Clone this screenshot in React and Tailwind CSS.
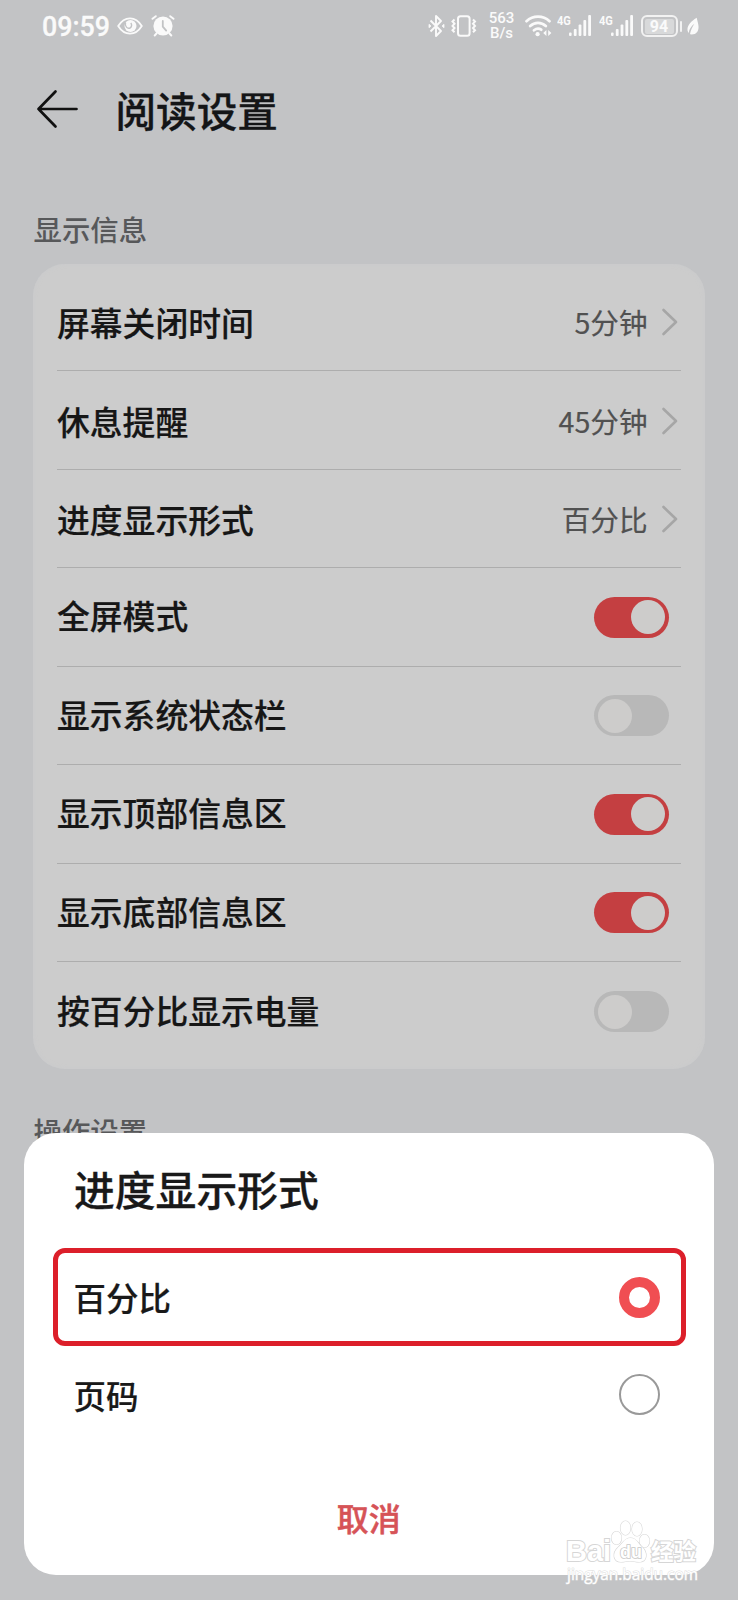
import React from "react";

const rows = [
  { label: "屏幕关闭时间", value: "5分钟" },
  { label: "休息提醒", value: "45分钟" },
  { label: "进度显示形式", value: "百分比" },
  { label: "全屏模式", on: true },
  { label: "显示系统状态栏", on: false },
  { label: "显示顶部信息区", on: true },
  { label: "显示底部信息区", on: true },
  { label: "按百分比显示电量", on: false },
];

const Signal = () => (
  <div className="flex h-[22px] w-[35px]">
    <span className="w-[12px] origin-left scale-x-85 font-['Roboto',sans-serif] text-[13px] font-bold leading-[12px]">4G</span>
    <svg width="23" height="22" viewBox="0 0 23 22" fill="currentColor">
      <rect x="0" y="17.5" width="2.6" height="3.5" rx="1" />
      <rect x="4.8" y="14" width="2.8" height="7" rx="1" />
      <rect x="9.6" y="9.5" width="2.8" height="11.5" rx="1" />
      <rect x="14.4" y="5" width="2.8" height="16" rx="1" />
      <rect x="19.2" y="0" width="2.8" height="21" rx="1" />
    </svg>
  </div>
);

const StatusBar = () => (
  <div className="flex h-[52px] items-center pl-[42px] pr-[39px] text-[#fafafa]">
    <span className="w-[75px] pt-[3px] font-['Roboto',sans-serif] text-[26.8px] font-medium leading-none [-webkit-text-stroke:0.3px_#fafafa]">09:59</span>
    <svg width="26" height="18" viewBox="0 0 26 18" fill="none" stroke="currentColor">
      <path d="M1.2 9C7.5-1.2 18.5-1.2 24.8 9 18.5 19.2 7.5 19.2 1.2 9Z" strokeWidth="1.8" />
      <circle cx="13.5" cy="9" r="6" fill="currentColor" stroke="none" />
      <path d="M8.5 5.5c-1 4 2 6.500 4.500 5.500 2-1 2-3.500.8-5" stroke="#c2c3c5" strokeWidth="1.4" />
    </svg>
    <svg className="ml-[8px]" width="25" height="22" viewBox="0 0 25 22" fill="none" stroke="currentColor" strokeLinecap="round">
      <circle cx="12" cy="11" r="9.6" fill="currentColor" stroke="none" />
      <path d="M1.5 3.800 4.800 1.200M22.500 3.800 19.200 1.200M5.500 18.500 3.700 20.500M18.500 18.500l1.800 2" strokeWidth="1.9" />
      <path d="M11.8 6v5.600l3.400 4" stroke="#c2c3c5" strokeWidth="1.8" />
    </svg>

    <div className="ml-auto flex items-center">
      <svg width="17" height="24" viewBox="0 0 17 24" fill="none" stroke="currentColor" strokeWidth="1.9" strokeLinejoin="round">
        <path d="M2.5 6.500 13 17l-5 5V2l5 5L2.500 17.500" />
        <path d="M1 10.300v3.400L3 12ZM16 10.300v3.400L14 12Z" fill="currentColor" strokeWidth=".8" />
      </svg>
      <svg className="ml-[5px]" width="28" height="22" viewBox="0 0 28 22" fill="none" stroke="currentColor" strokeWidth="2">
        <rect x="8" y="1.2" width="11.6" height="19.6" rx="2.5" />
        <path d="M4.500 4.500 2.500 6.500l2 2.200-2 2.200 2 2.200-2 2.200 2 2M23 4.500l2 2-2 2.200 2 2.200-2 2.200 2 2.200-2 2" strokeWidth="2" />
      </svg>
      <div className="ml-[9px] flex h-[30px] w-[30px] flex-col items-center justify-between font-['Roboto',sans-serif] text-[15px] font-medium leading-[15px]">
        <span>563</span>
        <span>B/s</span>
      </div>
      <svg className="ml-[8px]" width="27" height="22" viewBox="0 0 27 22" fill="none" stroke="currentColor" strokeWidth="2.7" strokeLinecap="round">
        <path d="M1.500 6.200c6.500-6 16.500-6 23 0M5.200 11c4.400-4.200 11.200-4.200 15.600 0M9 15.300c2.400-2 5-2.200 7.200-.6" />
        <circle cx="12.6" cy="19.2" r="2.1" fill="currentColor" stroke="none" />
        <path d="M21.400 15v6l-3.200-3ZM23.200 15v6l3.200-3Z" fill="currentColor" stroke="none" />
      </svg>
      <div className="ml-[5px] flex gap-[7px]">
        <Signal />
        <Signal />
      </div>
      <div className="ml-[7px] flex h-[22px] w-[37px] items-center justify-center rounded-[6px] border-2 border-[#f2f2f2]">
        <span className="flex h-[15px] w-[29px] items-center justify-center rounded-[2px] bg-[#d8d9da] pt-px font-['Roboto',sans-serif] text-[16px] font-bold leading-none">94</span>
      </div>
      <div className="ml-[2px] h-[11px] w-[2.5px] rounded bg-[#f2f2f2]" />
      <svg className="ml-[5px]" width="12" height="19" viewBox="0 0 13 19" fill="currentColor">
        <path d="M10.500 0C4.500 3.800.5 8 .5 12.500c0 1.800.5 3 1.300 4C2.500 12 4.800 9 8 6.500 6 10 4 13 3.200 18c6.300.8 9.500-2.500 9.300-8.500C12.300 6 11 3 10.500 0Z" />
      </svg>
    </div>
  </div>
);

const Toggle = ({ on }) => (
  <div className={`mr-[12px] mt-px flex h-[41px] w-[75px] items-center rounded-full px-[4px] ${on ? "justify-end bg-[#c43f41]" : "justify-start bg-[#b8b8b8]"}`}>
    <div className="size-[34px] rounded-full bg-[#cdcccb]" />
  </div>
);

const Row = ({ label, value, on }) => (
  <div className="flex h-[98.5px] items-center justify-between border-b border-[#adadad] last:border-b-0">
    <span className={`text-[32.8px] font-medium leading-none text-[#161616] [-webkit-text-stroke:0.2px_#161616] ${value ? "pt-[2px]" : "pb-[3px]"}`}>{label}</span>
    {value ? (
      <div className="flex items-center pr-[3px] pt-[2px]">
        <span className="text-[28.6px] leading-none text-[#515151] [-webkit-text-stroke:0.2px_#515151]">{value}</span>
        <svg className="ml-[13px]" width="17" height="28" viewBox="0 0 17 28" fill="none" stroke="#a6a6a6" strokeWidth="2.6" strokeLinecap="round" strokeLinejoin="round">
          <path d="M2.500 2 15 14 2.500 26" />
        </svg>
      </div>
    ) : (
      <Toggle on={on} />
    )}
  </div>
);

const Watermark = () => (
  <div className="absolute left-[566px] top-[1518px] w-[134px] text-white [paint-order:stroke]">
    <div className="flex h-[47px] items-end">
      <span className="w-[44px] font-['Liberation_Sans',sans-serif] text-[29px] font-bold leading-[28px] [-webkit-text-stroke:2px_#d6d6d6]">Bai</span>
      <svg width="41" height="46" viewBox="0 0 41 46" fill="#fff" stroke="#d8d8d8" strokeWidth="1.2">
        <ellipse cx="6.5" cy="19" rx="5" ry="6.5" />
        <ellipse cx="15.5" cy="9" rx="5" ry="7" />
        <ellipse cx="27" cy="10" rx="5" ry="7" />
        <ellipse cx="34.5" cy="22" rx="5" ry="6.5" />
        <path d="M20.500 19c6 0 7 5 11.500 9 6 5.500 5.500 15-3 15-4 0-5-1-9-1s-5 1-9 1c-8 0-9-9-3-14.500C12.500 25 14 19 20.500 19Z" />
        <text x="10" y="39" fontSize="18" fontWeight="bold" fontFamily="Liberation Sans" stroke="#c8c8c8" strokeWidth="1.6">du</text>
      </svg>
      <span className="text-[22.5px] font-bold leading-[29px] [-webkit-text-stroke:2px_#d6d6d6]">经验</span>
    </div>
    <div className="pl-px pt-px font-['Open_Sans',sans-serif] text-[15.4px] leading-[18px] [-webkit-text-stroke:1px_#dedede]">jingyan.baidu.com</div>
  </div>
);

const Dialog = () => (
  <div className="absolute left-[24px] top-[1133px] h-[442px] w-[689.5px] rounded-[32px] bg-white px-[28.5px] text-[#191919]">
    <h2 className="flex h-[115px] items-center pb-[2px] pl-[21.5px] text-[40.8px] font-medium leading-none [-webkit-text-stroke:0.3px_#191919]">进度显示形式</h2>
    <div className="flex h-[98px] w-[633.5px] items-center justify-between rounded-[12px] border-5 border-[#dc1f2a] pl-[16px] pr-[21px]">
      <span className="text-[32.5px] font-medium leading-none [-webkit-text-stroke:0.2px_#191919]">百分比</span>
      <span className="size-[41px] rounded-full border-10 border-[#f04e52]" />
    </div>
    <div className="flex h-[97px] items-center justify-between pl-[21px] pr-[25px]">
      <span className="pt-px text-[32.5px] font-medium leading-none [-webkit-text-stroke:0.2px_#191919]">页码</span>
      <span className="size-[41px] rounded-full border-2 border-[#999]" />
    </div>
    <button className="flex h-[148px] w-full items-center justify-center text-[32px] font-medium leading-none text-[#d65357] [-webkit-text-stroke:0.5px_#d65357]">取消</button>
  </div>
);

const App = () => (
  <div className="relative h-[1600px] w-[738px] overflow-hidden bg-[#c2c3c5] font-['Noto_Sans_CJK_SC',sans-serif]">
    <StatusBar />
    <header className="flex h-[116px] items-center pl-[36px]">
      <svg className="-mt-[2px]" width="43" height="40" viewBox="0 0 43 40" fill="none" stroke="#111" strokeWidth="2.7" strokeLinecap="round" strokeLinejoin="round">
        <path d="M19.500 2.500 2.500 20l17 17.500M2.500 20h38" />
      </svg>
      <h1 className="ml-[36.5px] text-[40.6px] font-medium leading-none text-[#141517] [-webkit-text-stroke:0.3px_#141517]">阅读设置</h1>
    </header>
    <h3 className="mt-[46px] pl-[33.5px] text-[28.4px] font-medium leading-[30px] text-[#57585a]">显示信息</h3>
    <div className="ml-[33px] mt-[20px] h-[805px] w-[671.5px] rounded-[32px] bg-[#cccccc] px-[24px] pt-[8.7px] shadow-[inset_0_0_5px_#c9cacc]">
      {rows.map((row) => (
        <Row key={row.label} {...row} />
      ))}
    </div>
    <h3 className="mt-[47px] pl-[33.5px] text-[28.4px] font-medium leading-[30px] text-[#57585a]">操作设置</h3>
    <Dialog />
    <Watermark />
  </div>
);

export default App;
